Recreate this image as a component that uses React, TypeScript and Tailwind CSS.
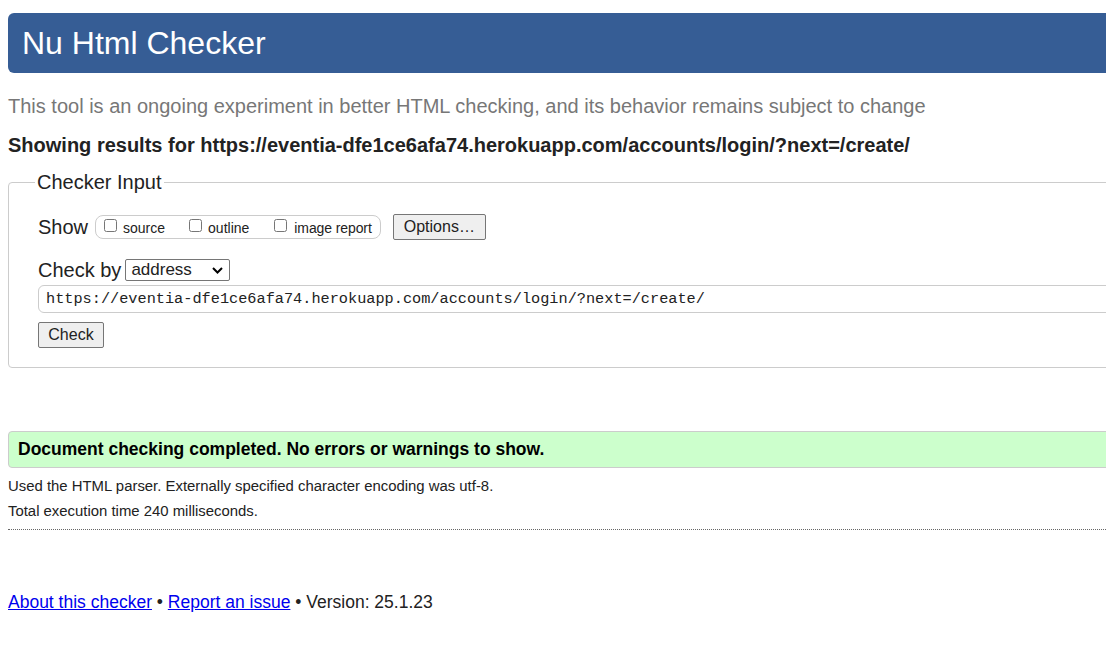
export default function App() {
  const url = "https://eventia-dfe1ce6afa74.herokuapp.com/accounts/login/?next=/create/";

  return (
    <div className="w-[1106px] h-[660px] overflow-hidden bg-white font-['Liberation_Sans',Arial,sans-serif] text-[#222]">
      <div className="w-[1220px] pl-2 pt-[13px]">
        {/* Header */}
        <h1 className="bg-[#365d95] rounded-[6px] h-[60px] pl-[14px] flex items-center text-white text-[32px] leading-none">
          Nu Html Checker
        </h1>

        <p className="mt-[21px] text-[20px] leading-6 text-[#777]">
          This tool is an ongoing experiment in better HTML checking, and its behavior remains subject to change
        </p>
        <p className="mt-[15px] text-[20px] leading-6 font-bold">
          Showing results for {url}
        </p>

        {/* Checker Input */}
        <fieldset className="mt-[13px] border border-[#ccc] rounded-[4px] px-[29px] pb-[19px] pt-[8px]">
          <legend className="text-[20px] leading-6 px-[2px] ml-[-3px]">Checker Input</legend>

          <div className="flex items-center mt-[12px]">
            <span className="text-[20px] leading-6">Show</span>
            <div className="ml-[7px] flex items-center h-[24px] border border-[#ccc] rounded-[8px] pl-[8px] pr-[8px] text-[14px]">
              <label className="flex items-center">
                <input type="checkbox" className="w-[13px] h-[13px] m-0 mr-[6px] -mt-[3px]" />
                <span className="mt-[2px]">source</span>
              </label>
              <label className="flex items-center ml-[24px]">
                <input type="checkbox" className="w-[13px] h-[13px] m-0 mr-[6px] -mt-[3px]" />
                <span className="mt-[2px]">outline</span>
              </label>
              <label className="flex items-center ml-[25px]">
                <input type="checkbox" className="w-[13px] h-[13px] m-0 mr-[7px] -mt-[3px]" />
                <span className="mt-[2px] tracking-[-0.1px]">image report</span>
              </label>
            </div>
            <button className="ml-[12px] h-[26px] px-[10px] border border-[#767676] rounded-[2px] bg-[#efefef] text-[16px] leading-none">
              Options…
            </button>
          </div>

          <div className="flex items-center mt-[18px]">
            <span className="text-[20px] leading-6">Check by</span>
            <div className="ml-[4px] relative w-[105px] h-[22px] border border-[#767676] rounded-[2px] bg-white flex items-center pl-[5px] text-[17px]">
              address
              <svg className="absolute right-[6px] top-[7px]" width="11" height="7" viewBox="0 0 11 7">
                <path d="M1 1l4.5 4.5L10 1" fill="none" stroke="#000" strokeWidth="2" />
              </svg>
            </div>
          </div>

          <div className="mt-[3px] h-[28px] border border-[#ccc] rounded-[6px] flex items-center pl-[7px] font-['Liberation_Mono',monospace] text-[15.25px]">
            {url}
          </div>

          <button className="mt-[9px] h-[26px] w-[66px] border border-[#767676] rounded-[2px] bg-[#efefef] text-[16px] leading-none">
            Check
          </button>
        </fieldset>

        {/* Result */}
        <div className="mt-[63px] h-[37px] bg-[#ccffcc] border border-[#ccc] rounded-[4px] flex items-center pl-[9px] text-[17.5px] font-bold text-black">
          Document checking completed. No errors or warnings to show.
        </div>
        <p className="mt-[10px] text-[14.9px] leading-4">
          Used the HTML parser. Externally specified character encoding was utf-8.
        </p>
        <p className="mt-[9px] text-[14.9px] leading-4">Total execution time 240 milliseconds.</p>
        <hr className="mt-[10px] border-0 border-t border-dotted border-[#666]" />

        {/* Footer */}
        <p className="mt-[60px] text-[17.5px] leading-6">
          <a href="#" className="text-[#0000ee] underline">About this checker</a>
          {" • "}
          <a href="#" className="text-[#0000ee] underline">Report an issue</a>
          {" • Version: 25.1.23"}
        </p>
      </div>
    </div>
  );
}
